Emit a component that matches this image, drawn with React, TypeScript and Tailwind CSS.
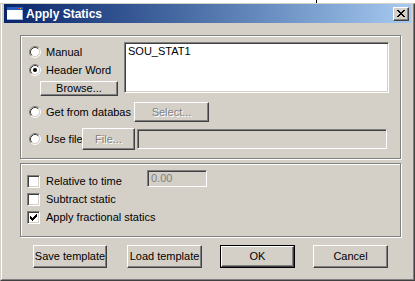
import React from "react";

const raised =
  "flex items-center justify-center bg-[#d4d0c8] border border-t-white border-l-white border-r-[#404040] border-b-[#404040] shadow-[inset_-1px_-1px_0_#808080]";
const sunken =
  "border border-t-[#808080] border-l-[#808080] border-r-white border-b-white shadow-[inset_1px_1px_0_#404040,inset_-1px_-1px_0_#d4d0c8]";
const etched =
  "border border-[#808080] shadow-[1px_1px_0_#fff,inset_1px_1px_0_#fff]";
const disabledText = "text-[#808080] [text-shadow:1px_1px_0_#fff]";

// pixel glyphs for the check mark and the close "x"
const checkPixels = [
  [6, 0], [5, 1], [6, 1], [0, 2], [4, 2], [5, 2], [6, 2],
  [0, 3], [1, 3], [3, 3], [4, 3], [5, 3], [0, 4], [1, 4], [2, 4], [3, 4], [4, 4],
  [1, 5], [2, 5], [3, 5], [2, 6],
];
const closePixels = [
  [0, 0], [1, 0], [6, 0], [7, 0], [1, 1], [2, 1], [5, 1], [6, 1],
  [2, 2], [3, 2], [4, 2], [5, 2], [3, 3], [4, 3], [2, 4], [3, 4], [4, 4], [5, 4],
  [1, 5], [2, 5], [5, 5], [6, 5], [0, 6], [1, 6], [6, 6], [7, 6],
];

const Radio = ({ checked }: { checked?: boolean }) => (
  <svg width="12" height="12" viewBox="0 0 12 12" className="shrink-0">
    <circle cx="6" cy="6" r="4.5" fill="#fff" />
    <path d="M2.11 9.89 A5.5 5.5 0 0 1 9.89 2.11" stroke="#808080" fill="none" />
    <path d="M9.89 2.11 A5.5 5.5 0 0 1 2.11 9.89" stroke="#fff" fill="none" />
    <path d="M2.82 9.18 A4.5 4.5 0 0 1 9.18 2.82" stroke="#404040" fill="none" />
    <path d="M9.18 2.82 A4.5 4.5 0 0 1 2.82 9.18" stroke="#d4d0c8" fill="none" />
    {checked && <circle cx="6" cy="6" r="2" fill="#000" />}
  </svg>
);

const Checkbox = ({ checked }: { checked?: boolean }) => (
  <div className={`w-[13px] h-[13px] shrink-0 bg-white ${sunken}`}>
    {checked && (
      <svg width="11" height="11" viewBox="0 0 11 11" shapeRendering="crispEdges">
        {checkPixels.map(([x, y]) => (
          <rect key={`${x}-${y}`} x={x + 2} y={y + 2} width="1" height="1" fill="#000" />
        ))}
      </svg>
    )}
  </div>
);

const RadioRow = ({ label, checked }: { label: string; checked?: boolean }) => (
  <div className="flex items-center h-[18px] whitespace-nowrap">
    <Radio checked={checked} />
    <span className="ml-[5px]">{label}</span>
  </div>
);

const CheckRow = ({ label, checked }: { label: string; checked?: boolean }) => (
  <div className="flex items-center whitespace-nowrap">
    <Checkbox checked={checked} />
    <span className="ml-[6px]">{label}</span>
  </div>
);

const TitleIcon = () => (
  <svg width="16" height="13" viewBox="0 0 16 13" shapeRendering="crispEdges">
    <rect x="0" y="0" width="16" height="13" fill="#fff" />
    <rect x="0" y="0" width="16" height="3" fill="#2a5cc0" />
    <rect x="0" y="12" width="16" height="1" fill="#9fb4d8" />
    <rect x="15" y="3" width="1" height="10" fill="#9fb4d8" />
    <rect x="11" y="1" width="1" height="1" fill="#e04040" />
    <rect x="13" y="1" width="1" height="1" fill="#f0c040" />
  </svg>
);

const App = () => {
  return (
    <div className="w-[415px] h-[281px] flex flex-col font-['Liberation_Sans',Arial,sans-serif] text-[11px] text-black leading-none">
      <div className="h-[3px] bg-white flex">
        <div className="ml-[316px] w-px h-[3px] bg-black" />
      </div>
      <div className="flex-1 flex bg-[#d4d0c8] border-t border-t-[#d4d0c8] border-l border-l-[#d4d0c8] border-r border-r-[#404040] border-b border-b-[#404040]">
        <div className="flex-1 flex flex-col border-l border-l-white border-r border-r-[#808080] border-b border-b-[#808080] px-[2px] pb-[2px]">
          {/* title bar */}
          <div className="h-[19px] flex items-center bg-gradient-to-r from-[#0a246a] to-[#a6caf0] pl-[3px] pr-[2px]">
            <TitleIcon />
            <span className="ml-[3px] text-white font-bold text-[12px]">Apply Statics</span>
            <div className={`ml-auto w-[16px] h-[14px] ${raised}`}>
              <svg width="8" height="7" viewBox="0 0 8 7" shapeRendering="crispEdges">
                {closePixels.map(([x, y]) => (
                  <rect key={`${x}-${y}`} x={x} y={y} width="1" height="1" fill="#000" />
                ))}
              </svg>
            </div>
          </div>

          {/* source group */}
          <div className={`ml-[16px] mt-[12px] w-[381px] h-[124px] pt-[6px] flex flex-col ${etched}`}>
            <div className="flex">
              <div className="w-[103px] pl-[8px] pt-[1px] flex flex-col">
                <RadioRow label="Manual" />
                <RadioRow label="Header Word" checked />
                <div className={`mt-[2px] ml-[11px] w-[78px] h-[15px] ${raised}`}>Browse...</div>
              </div>
              <div className={`w-[265px] h-[51px] bg-white pl-[3px] pt-[3px] ${sunken}`}>SOU_STAT1</div>
            </div>
            <div className="mt-[6px] h-[20px] flex items-center">
              <div className="w-[113px] pl-[8px]">
                <RadioRow label="Get from databas" />
              </div>
              <div className={`w-[75px] h-[20px] ${raised} ${disabledText}`}>Select...</div>
            </div>
            <div className="mt-[6px] h-[22px] flex items-center">
              <div className="w-[61px] pl-[8px]">
                <RadioRow label="Use file" />
              </div>
              <div className={`w-[53px] h-[22px] ${raised} ${disabledText}`}>File...</div>
              <div className={`ml-[2px] w-[250px] h-[20px] ${sunken}`} />
            </div>
          </div>

          {/* options group */}
          <div className={`ml-[16px] mt-[4px] w-[381px] h-[74px] pt-[8px] pl-[6px] flex flex-col ${etched}`}>
            <div className="h-[18px] flex items-center">
              <div className="w-[120px]">
                <CheckRow label="Relative to time" />
              </div>
              <div className={`self-start -mt-[2px] w-[60px] h-[17px] pl-[3px] flex items-center ${sunken} text-[#808080]`}>
                0.00
              </div>
            </div>
            <div className="h-[18px] flex items-center">
              <CheckRow label="Subtract static" />
            </div>
            <div className="h-[18px] flex items-center">
              <CheckRow label="Apply fractional statics" checked />
            </div>
          </div>

          {/* buttons */}
          <div className="mt-[8px] ml-[29px] flex">
            <div className={`w-[74px] h-[23px] ${raised}`}>Save template</div>
            <div className={`ml-[20px] w-[75px] h-[23px] ${raised}`}>Load template</div>
            <div className="ml-[18px] w-[75px] h-[23px] border border-black flex">
              <div className={`flex-1 ${raised}`}>OK</div>
            </div>
            <div className={`ml-[18px] w-[75px] h-[23px] ${raised}`}>Cancel</div>
          </div>
        </div>
      </div>
    </div>
  );
};

export default App;
